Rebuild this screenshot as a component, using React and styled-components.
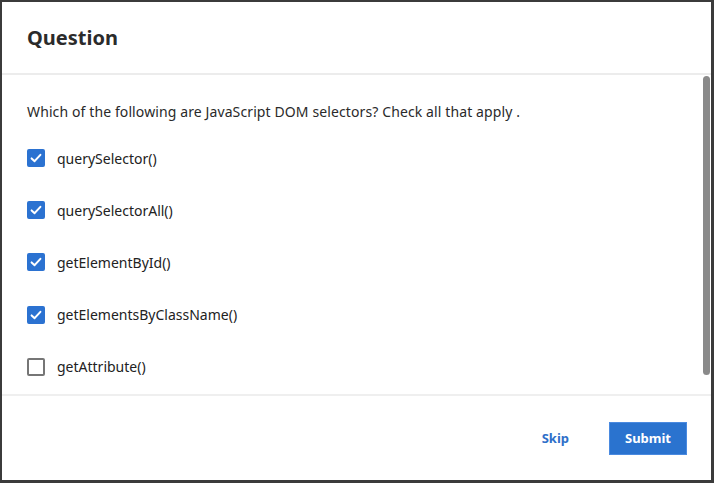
import React, { useState } from "react";
import styled, { createGlobalStyle } from "styled-components";

const GlobalStyle = createGlobalStyle`
  html, body {
    margin: 0;
    padding: 0;
    background: #ffffff;
  }
  * {
    box-sizing: border-box;
  }
`;

const options = [
  { label: "querySelector()", checked: true },
  { label: "querySelectorAll()", checked: true },
  { label: "getElementById()", checked: true },
  { label: "getElementsByClassName()", checked: true },
  { label: "getAttribute()", checked: false },
];

const App = () => {
  const [items, setItems] = useState(options);

  const toggle = (i) => {
    setItems(items.map((it, idx) => (idx === i ? { ...it, checked: !it.checked } : it)));
  };

  return (
    <>
      <GlobalStyle />
      <Frame>
        <Header>
          <Title>Question</Title>
        </Header>
        <Body>
          <Content>
            <Prompt>
              Which of the following are JavaScript DOM selectors? Check all that apply .
            </Prompt>
            <List>
              {items.map((it, i) => (
                <Row key={it.label} onClick={() => toggle(i)}>
                  <Box checked={it.checked}>
                    {it.checked && (
                      <svg width="14" height="14" viewBox="0 0 14 14">
                        <path
                          d="M2.6 7.4 L5.6 10.2 L11.4 3.8"
                          fill="none"
                          stroke="#fff"
                          strokeWidth="2"
                          strokeLinecap="round"
                          strokeLinejoin="round"
                        />
                      </svg>
                    )}
                  </Box>
                  <Label>{it.label}</Label>
                </Row>
              ))}
            </List>
          </Content>
          <ScrollThumb />
        </Body>
        <Footer>
          <SkipButton>Skip</SkipButton>
          <SubmitButton>Submit</SubmitButton>
        </Footer>
      </Frame>
    </>
  );
};
export default App;

const Frame = styled.div`
  width: 714px;
  height: 483px;
  border-style: solid;
  border-color: #3b3b3b;
  border-width: 2px 3px 3px 2px;
  display: flex;
  flex-direction: column;
  background: #fff;
  font-family: "Noto Sans", "Open Sans", sans-serif;
  color: #222;
`;

const Header = styled.div`
  height: 73px;
  flex-shrink: 0;
  display: flex;
  align-items: center;
  padding: 0 25px;
  border-bottom: 2px solid #ececec;
`;

const Title = styled.h1`
  margin: 0;
  font-size: 20px;
  font-weight: 700;
  color: #2b2b2b;
`;

const Body = styled.div`
  position: relative;
  height: 321px;
  flex-shrink: 0;
  overflow: hidden;
  border-bottom: 2px solid #efefef;
`;

/* overlay scrollbar thumb (screenshots hide native scrollbars) */
const ScrollThumb = styled.div`
  position: absolute;
  top: 1px;
  right: 1px;
  width: 7px;
  height: 299px;
  border-radius: 4px;
  background: #8a8a8a;
`;

const Content = styled.div`
  padding: 27px 25px 25px 25px;
`;

const Prompt = styled.p`
  margin: 0;
  font-size: 14px;
  line-height: 20px;
  letter-spacing: 0.11px;
  color: #2a2a2a;
`;

const List = styled.div`
  margin-top: 10px;
  display: flex;
  flex-direction: column;
`;

const Row = styled.label`
  height: 52.2px;
  display: flex;
  align-items: center;
  gap: 12px;
  cursor: pointer;
`;

const Box = styled.span`
  width: 18px;
  height: 18px;
  border-radius: 2px;
  display: flex;
  align-items: center;
  justify-content: center;
  flex-shrink: 0;
  background: ${(p) => (p.checked ? "#2b72d1" : "#fff")};
  border: 2px solid ${(p) => (p.checked ? "#2b72d1" : "#767676")};
`;

const Label = styled.span`
  font-size: 14px;
  color: #222;
`;

const Footer = styled.div`
  flex: 1;
  display: flex;
  align-items: center;
  justify-content: flex-end;
  padding: 0 24px;
  gap: 40px;
`;

const SkipButton = styled.button`
  border: none;
  background: none;
  padding: 0;
  font-family: inherit;
  font-size: 13px;
  font-weight: 700;
  color: #2f6fc9;
  cursor: pointer;
`;

const SubmitButton = styled.button`
  width: 78px;
  height: 33px;
  border: 1px solid #4a8ae0;
  background: #2a73cf;
  color: #fff;
  font-family: inherit;
  font-size: 13px;
  font-weight: 700;
  cursor: pointer;
`;
